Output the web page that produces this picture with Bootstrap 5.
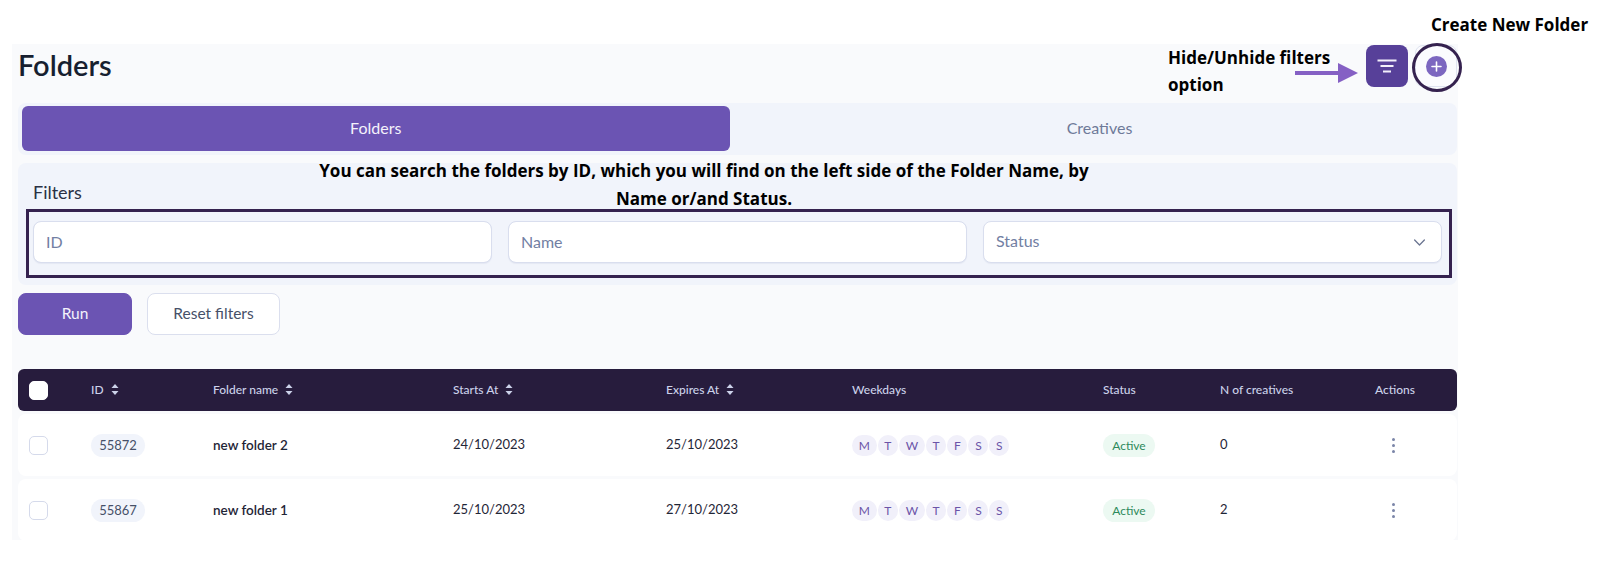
<!DOCTYPE html>
<html lang="en">
<head>
<meta charset="utf-8">
<title>Folders</title>
<link href="https://cdn.jsdelivr.net/npm/bootstrap@5.3.0/dist/css/bootstrap.min.css" rel="stylesheet">
<style>
html,body{height:568px;overflow:hidden;background:#fff}
body{position:relative;font-family:"Lato","Liberation Sans",sans-serif;color:#1b2333}
.shell{margin:44px 0 0 12px;width:1446px;height:496px;overflow:hidden;background:#f9fafc;padding:0 1px 0 6px}
.top-bar{height:59px}
.page-title{font-size:29px;font-weight:600;line-height:42px;margin:0;color:#171f30}
.tool-gap{gap:7px}
.tool-btn{width:42px;height:42px;border-radius:8px;margin-top:1px;padding:0}
.tool-filter{background:#574099;border:0}
.tool-add{background:#fbfbfe;border:1px solid #dfe3f0}
.add-dot{width:21px;height:21px;border-radius:50%;background:#7c66c0}
.tab-wrap{background:#f1f4fb;border-radius:8px;padding:3px 2px 4px 3.5px;height:52px;flex-wrap:nowrap}
.tab-first{flex:0 0 708.5px}
.tab-last{flex:1 1 0}
.tab-wrap .nav-link{height:45px;line-height:43px;padding:0;font-size:16px;color:#6e7a99;border-radius:6px;text-align:center}
.tab-wrap .nav-link.active{background:#6b54b3;color:#f4f2fb}
.tab-wrap .tab-second{padding-left:14px}
.filter-box{background:#f1f4fb;border-radius:8px;margin-top:8px;padding:17px 15px 22px;height:122px}
.filter-title{font-size:18px;line-height:24px;margin:0 0 17px;font-weight:400;color:#2a3145}
.filter-box .form-control,.filter-box .form-select{height:42px;border:1px solid #d9deee;border-radius:8px;font-size:16px;padding:0 12px 2px;color:#7280a3;box-shadow:0 1px 1px #e4e8f3}
.filter-box .form-control::placeholder{color:#7280a3}
.filter-box .form-select{--bs-form-select-bg-img:url("data:image/svg+xml,%3csvg xmlns='http://www.w3.org/2000/svg' viewBox='0 0 16 16'%3e%3cpath fill='none' stroke='%236b7591' stroke-linecap='round' stroke-linejoin='round' stroke-width='1.6' d='M2 5l6 6 6-6'/%3e%3c/svg%3e");background-position:right 15px center;background-size:13px 13px}
.action-row{margin-top:8px;gap:15px}
.act-btn{height:42px;border-radius:8px;font-size:15.5px;padding:0}
.act-run{width:114px;background:#6b54b3;color:#f4f2fb;border:1px solid #6b54b3}
.act-reset{width:133px;background:#fff;color:#465068;border:1px solid #dbdfee}
.data-grid{margin-top:34px}
.grid-line{display:grid;grid-template-columns:62px 122px 240px 213px 186px 251px 117px 155px 1fr;align-items:center;padding-left:11px}
.grid-head{height:42px;background:#271c3d;border-radius:6px;color:#ccd2ea;font-size:12px;font-weight:500}
.grid-row{height:62px;background:#fff;border-radius:8px;margin-top:3px;font-size:13px;color:#1f2637}
.grid-line .form-check-input{width:19px;height:19px;margin:0;border:1px solid #d5daeb;border-radius:5px;display:block}
.grid-head .form-check-input{background:#fff;border-color:#fff}
.sort-mark{margin-left:7px;vertical-align:-1px}
.id-pill{display:inline-block;width:54px;height:23px;line-height:23px;text-align:center;border-radius:12px;background:#f1f4fb;color:#465068}
.folder-name{font-weight:600;font-size:13.5px}
.day-list{gap:1px}
.day-pill{height:21px;line-height:21px;padding:0 6.7px;border-radius:11px;background:#f1f0fa;color:#6b54a8;font-size:12px}
.state-pill{display:inline-block;width:52px;height:23px;line-height:23px;text-align:center;border-radius:12px;background:#ecf9f2;color:#2d8a5c;font-size:12px}
.kebab{width:4px;margin-left:17px;gap:3px}
.kebab i{display:block;width:3px;height:3px;border-radius:50%;background:#7b85a8}
.note{position:absolute;font-family:"Open Sans","Liberation Sans",sans-serif;font-weight:700;color:#000;font-size:17px;white-space:nowrap;margin:0}
.note-hide{left:1168px;top:44px;line-height:27px}
.note-create{left:1431px;top:13px;line-height:24px}
.note-search{left:304px;top:157px;width:800px;text-align:center;line-height:28px}
.mark-frame{position:absolute;left:26px;top:209px;width:1426px;height:69px;border:3px solid #35224f}
.mark-ring{position:absolute;left:1412px;top:43px;width:50px;height:49px;border:3px solid #35224f;border-radius:50%}
.mark-arrow{position:absolute;left:1295px;top:62px}
</style>
</head>
<body>
<main class="shell">
  <header class="top-bar d-flex justify-content-between align-items-start">
    <h1 class="page-title">Folders</h1>
    <div class="d-flex tool-gap">
      <button class="btn tool-btn tool-filter d-flex align-items-center justify-content-center" type="button" aria-label="Filters">
        <svg width="20" height="14" viewBox="0 0 20 14"><path d="M0.5 1.5h19M3.5 7h13M6 12.5h8" stroke="#f3effb" stroke-width="2" fill="none"/></svg>
      </button>
      <button class="btn tool-btn tool-add d-flex align-items-center justify-content-center" type="button" aria-label="Create">
        <span class="add-dot d-flex align-items-center justify-content-center">
          <svg width="11" height="11" viewBox="0 0 11 11"><path d="M5.5 1v9M1 5.5h9" stroke="#fff" stroke-width="1.6" stroke-linecap="round"/></svg>
        </span>
      </button>
    </div>
  </header>

  <ul class="nav nav-pills tab-wrap">
    <li class="nav-item tab-first"><a class="nav-link active" href="#">Folders</a></li>
    <li class="nav-item tab-last"><a class="nav-link tab-second" href="#">Creatives</a></li>
  </ul>

  <section class="filter-box">
    <h2 class="filter-title">Filters</h2>
    <div class="row g-3">
      <div class="col-4"><input class="form-control" type="text" placeholder="ID"></div>
      <div class="col-4"><input class="form-control" type="text" placeholder="Name"></div>
      <div class="col-4"><select class="form-select"><option>Status</option></select></div>
    </div>
  </section>

  <div class="action-row d-flex">
    <button class="btn act-btn act-run" type="button">Run</button>
    <button class="btn act-btn act-reset" type="button">Reset filters</button>
  </div>

  <div class="data-grid">
    <div class="grid-line grid-head">
      <div><input class="form-check-input" type="checkbox" aria-label="All"></div>
      <div>ID<svg class="sort-mark" width="8" height="11" viewBox="0 0 8 11"><path d="M4 0l3.5 4h-7zM4 11L.5 7h7z" fill="#ccd2ea"/></svg></div>
      <div>Folder name<svg class="sort-mark" width="8" height="11" viewBox="0 0 8 11"><path d="M4 0l3.5 4h-7zM4 11L.5 7h7z" fill="#ccd2ea"/></svg></div>
      <div>Starts At<svg class="sort-mark" width="8" height="11" viewBox="0 0 8 11"><path d="M4 0l3.5 4h-7zM4 11L.5 7h7z" fill="#ccd2ea"/></svg></div>
      <div>Expires At<svg class="sort-mark" width="8" height="11" viewBox="0 0 8 11"><path d="M4 0l3.5 4h-7zM4 11L.5 7h7z" fill="#ccd2ea"/></svg></div>
      <div>Weekdays</div>
      <div>Status</div>
      <div>N of creatives</div>
      <div>Actions</div>
    </div>
    <div class="grid-line grid-row">
      <div><input class="form-check-input" type="checkbox" aria-label="Select"></div>
      <div><span class="id-pill">55872</span></div>
      <div class="folder-name">new folder 2</div>
      <div>24/10/2023</div>
      <div>25/10/2023</div>
      <div class="d-flex day-list"><span class="day-pill">M</span><span class="day-pill">T</span><span class="day-pill">W</span><span class="day-pill">T</span><span class="day-pill">F</span><span class="day-pill">S</span><span class="day-pill">S</span></div>
      <div><span class="state-pill">Active</span></div>
      <div>0</div>
      <div class="kebab d-flex flex-column"><i></i><i></i><i></i></div>
    </div>
    <div class="grid-line grid-row">
      <div><input class="form-check-input" type="checkbox" aria-label="Select"></div>
      <div><span class="id-pill">55867</span></div>
      <div class="folder-name">new folder 1</div>
      <div>25/10/2023</div>
      <div>27/10/2023</div>
      <div class="d-flex day-list"><span class="day-pill">M</span><span class="day-pill">T</span><span class="day-pill">W</span><span class="day-pill">T</span><span class="day-pill">F</span><span class="day-pill">S</span><span class="day-pill">S</span></div>
      <div><span class="state-pill">Active</span></div>
      <div>2</div>
      <div class="kebab d-flex flex-column"><i></i><i></i><i></i></div>
    </div>
  </div>
</main>

<p class="note note-create">Create New Folder</p>
<p class="note note-hide">Hide/Unhide filters<br>option</p>
<p class="note note-search">You can search the folders by ID, which you will find on the left side of the Folder Name, by<br>Name or/and Status.</p>
<div class="mark-frame"></div>
<div class="mark-ring"></div>
<svg class="mark-arrow" width="63" height="22" viewBox="0 0 63 22"><path d="M0 9h43V1l20 10-20 10v-8H0z" fill="#8560c4"/></svg>
<script src="https://cdn.jsdelivr.net/npm/bootstrap@5.3.0/dist/js/bootstrap.bundle.min.js"></script>
</body>
</html>
